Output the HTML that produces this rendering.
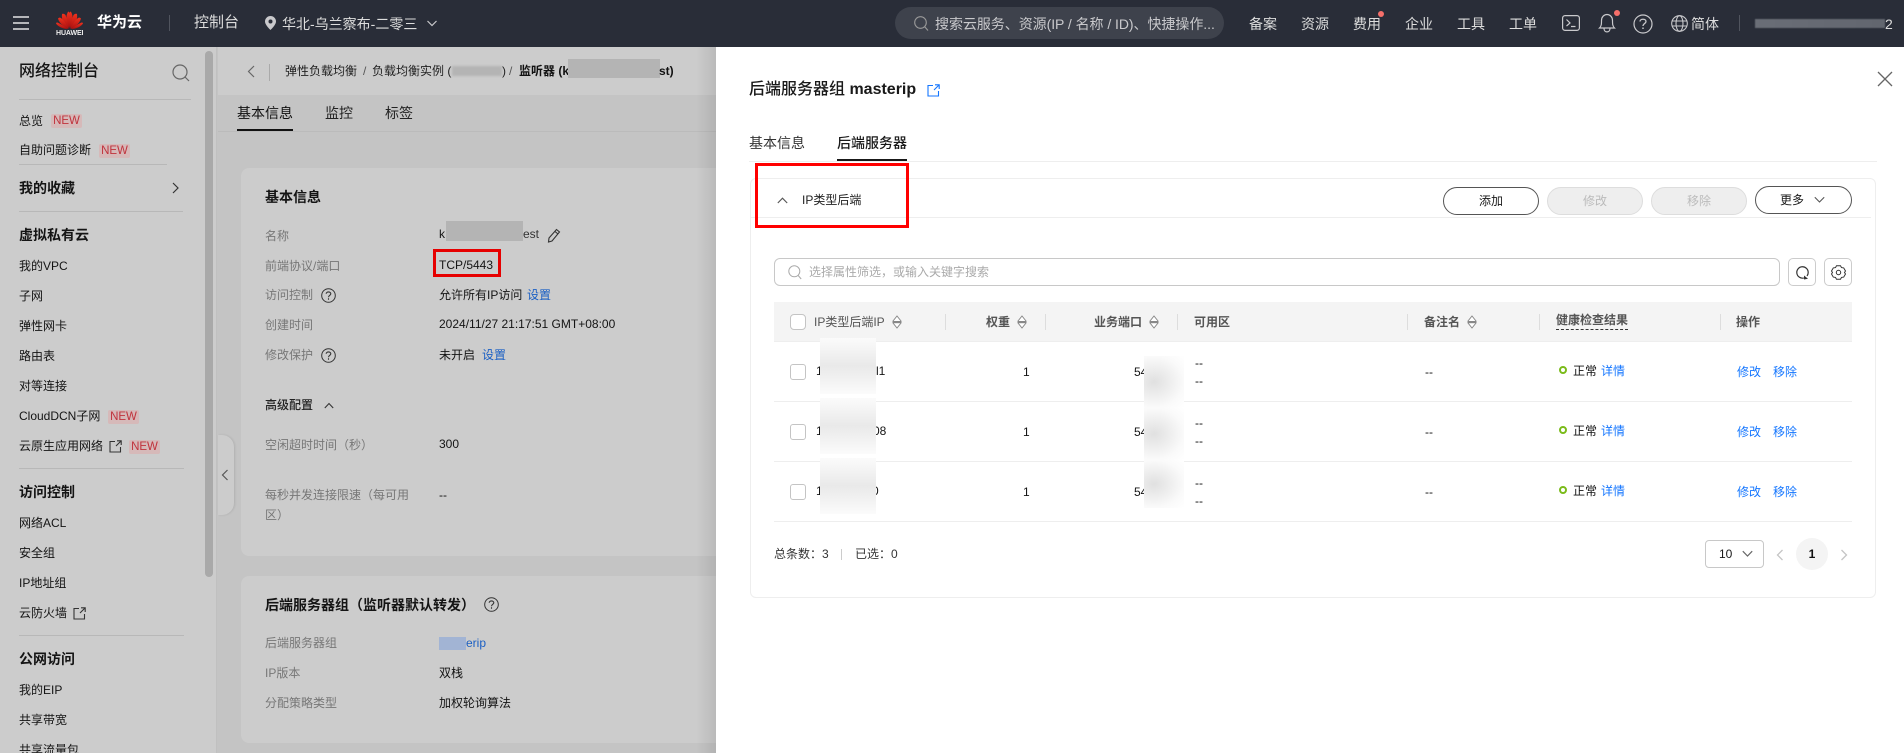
<!DOCTYPE html>
<html lang="zh"><head><meta charset="utf-8"><title>后端服务器组</title>
<style>
*{box-sizing:border-box}
html{margin:0;padding:0;width:1904px;height:753px;overflow:hidden;background:#c4c4c4}
body{margin:0;padding:0;width:1904px;height:753px;overflow:hidden;position:relative;background:#c4c4c4;font-family:"Liberation Sans","Noto Sans CJK SC",sans-serif;font-size:12px;color:#141414}
#w{position:absolute;left:0;top:0;width:1904px;height:753px;overflow:hidden;contain:paint}
.a,.t,svg.i{position:absolute}
.t{white-space:nowrap;line-height:20px;height:20px}
.n{font-size:14px;color:#ddd}
.b{font-weight:700}
.h{font-size:14px;font-weight:700}
.g{color:#777}
.l{color:#1a5fc4}
.bl{color:#1476ff}
.new{position:absolute;width:31px;height:14px;line-height:14px;background:#d6b9b9;color:#c0323c;font-size:11.5px;text-align:center;border-radius:2px}
.dv{position:absolute;height:1px;background:#b8b8b8}
.sep{position:absolute;width:1px;height:16px;background:#ddd;top:314px}
.cb{position:absolute;width:16px;height:16px;left:790px;border:1px solid #c4c4c4;border-radius:3px;background:#fff}
.rl{position:absolute;left:774px;width:1078px;height:1px;background:#eee}
.th{color:#555;font-weight:700;top:312px}
.btn{position:absolute;width:96px;height:28px;border-radius:14px;text-align:center;line-height:26px;border:1px solid #555;background:#fff;color:#191919}
.dis{border-color:#ddd;background:#eee;color:#bbb}
.ib{position:absolute;top:258px;width:28px;height:28px;border:1px solid #ccc;border-radius:5px;background:#fff}
.m1{position:absolute;background:#b4b4b4;filter:blur(1px)}
.mw{position:absolute;left:820px;width:56px;background:linear-gradient(180deg,#fbfbfb 0,#e9e9e9 50%,#fbfbfb 100%)}
.mp{position:absolute;left:1144px;width:40px;background:radial-gradient(ellipse at 25% 50%,#e0e0e0 0,#fafafa 70%,#fff 100%)}
</style></head><body><div id="w">

<!-- Top bar -->
<div class="a" style="left:0;top:0;width:1904px;height:47px;background:#292d38"></div>
<svg class="i" style="left:13px;top:15px" width="16" height="16" viewBox="0 0 16 16"><path d="M0 2h16M0 8h16M0 14h16" stroke="#c9c9cc" stroke-width="1.800"/></svg>
<svg class="i" style="left:56px;top:8px" width="27" height="21" viewBox="-13.500 -20 27 21"><defs><linearGradient id="pg" x1="0" y1="0" x2="0" y2="1"><stop offset="0" stop-color="#f0321e"/><stop offset="1" stop-color="#a81010"/></linearGradient></defs><g fill="url(#pg)"><path d="M-.3 0C-3.500-5-4.400-11-1.400-16.500-.3-16-.2-15.800 0-15 .8-10 .5-5-.3 0Z"/><path d="M.3 0C3.500-5 4.400-11 1.400-16.500.3-16 .2-15.800 0-15-.8-10-.5-5 .3 0Z"/><path d="M-.8 .5C-5-3-8.500-8-7.500-14-6-14.500-5-14-4-13-2.500-9-1.500-4-.8 .5Z"/><path d="M.8 .5C5-3 8.500-8 7.500-14 6-14.500 5-14 4-13 2.500-9 1.500-4 .8 .5Z"/><path d="M-1 .8C-5-1-10-4-11.500-9.500-10.500-10.500-9.500-10.500-8.500-10-5-7-2.500-3-1 .8Z"/><path d="M1 .8C5-1 10-4 11.500-9.500 10.500-10.500 9.500-10.500 8.500-10 5-7 2.500-3 1 .8Z"/><path d="M-1.500 1C-5 1-11-.5-13.500-4.500-13-6-12-5.500-11-5-7-3-4-1-1.500 1Z"/><path d="M1.500 1C5 1 11-.5 13.500-4.500 13-6 12-5.500 11-5 7-3 4-1 1.500 1Z"/></g></svg>
<div class="t" style="left:56px;top:24px;width:27px;text-align:center;font-size:7px;font-weight:700;color:#eee;letter-spacing:-.1px">HUAWEI</div>
<div class="t b" style="left:97px;top:13px;font-size:15px;color:#fff">华为云</div>
<div class="a" style="left:169px;top:15px;width:1px;height:16px;background:#50545e"></div>
<div class="t" style="left:194px;top:13px;font-size:15px;color:#ddd">控制台</div>
<svg class="i" style="left:265px;top:16px" width="11" height="14" viewBox="0 0 11 14"><path fill-rule="evenodd" d="M5.500 0A5.500 5.500 0 0 1 11 5.500C11 9 5.500 14 5.500 14S0 9 0 5.500A5.500 5.500 0 0 1 5.500 0ZM5.500 3.500a2 2 0 1 0 0 4 2 2 0 0 0 0-4Z" fill="#c9c9cc"/></svg>
<div class="t n" style="left:282px;top:14px">华北-乌兰察布-二零三</div>
<svg class="i" style="left:427px;top:20px" width="10" height="7" viewBox="0 0 10 7"><path d="M.5 1 5 5.500 9.500 1" fill="none" stroke="#c9c9cc" stroke-width="1.200"/></svg>
<div class="a" style="left:895px;top:7px;width:329px;height:32px;border-radius:16px;background:#3e424c"></div>
<svg class="i" style="left:914px;top:16px" width="15" height="15" viewBox="0 0 15 15"><circle cx="6.500" cy="6.500" r="5.800" fill="none" stroke="#999" stroke-width="1.100"/><path d="M10.500 10.500 14 14.500" stroke="#999" stroke-width="1.100"/></svg>
<div class="t" style="left:935px;top:14px;font-size:14px;color:#c9c9cc;width:282px;overflow:hidden;letter-spacing:-.05px">搜索云服务、资源(IP / 名称 / ID)、快捷操作...</div>
<div class="t n" style="left:1249px;top:14px">备案</div>
<div class="t n" style="left:1301px;top:14px">资源</div>
<div class="t n" style="left:1353px;top:14px">费用</div>
<div class="a" style="left:1378px;top:11px;width:6px;height:6px;border-radius:50%;background:#f66f6a"></div>
<div class="t n" style="left:1405px;top:14px">企业</div>
<div class="t n" style="left:1457px;top:14px">工具</div>
<div class="t n" style="left:1509px;top:14px">工单</div>
<svg class="i" style="left:1562px;top:15px" width="18" height="16" viewBox="0 0 18 16"><rect x=".6" y=".6" width="16.800" height="14.800" rx="2.500" fill="none" stroke="#c9c9cc" stroke-width="1.200"/><path d="M4.500 4.500 8 8 4.500 11M9 11.500h4.500" fill="none" stroke="#c9c9cc" stroke-width="1.200"/></svg>
<svg class="i" style="left:1598px;top:12px" width="18" height="21" viewBox="0 0 18 21"><path d="M1.500 16C3.500 14 3.500 12 3.500 8.500 3.500 5 6 2.500 9 2.500S14.500 5 14.500 8.500C14.500 12 14.500 14 16.500 16ZM6 16.500C6 21 12 21 12 16.500" fill="none" stroke="#c9c9cc" stroke-width="1.200"/></svg>
<div class="a" style="left:1614px;top:10px;width:6px;height:6px;border-radius:50%;background:#f66f6a"></div>
<svg class="i" style="left:1633px;top:14px" width="20" height="20" viewBox="0 0 20 20"><circle cx="10" cy="10" r="9" fill="none" stroke="#c9c9cc" stroke-width="1.200"/><path d="M7 7.500C7 4.500 13 4.500 13 7.500 13 9.500 10 9.500 10 12" fill="none" stroke="#c9c9cc" stroke-width="1.300"/><path d="M10 13.500v1.500" stroke="#c9c9cc" stroke-width="1.400"/></svg>
<svg class="i" style="left:1671px;top:15px" width="17" height="17" viewBox="0 0 17 17"><g fill="none" stroke="#c9c9cc" stroke-width="1.100"><circle cx="8.500" cy="8.500" r="7.800"/><ellipse cx="8.500" cy="8.500" rx="3.500" ry="7.800"/><path d="M1 6h15M1 11h15"/></g></svg>
<div class="t n" style="left:1691px;top:14px">简体</div>
<div class="a" style="left:1739px;top:15px;width:1px;height:16px;background:#50545e"></div>
<div class="a" style="left:1755px;top:19px;width:130px;height:9px;background:linear-gradient(90deg,#6a6e77,#62666f);filter:blur(.6px)"></div>
<div class="t n" style="left:1885px;top:14px">2</div>

<!-- Sidebar -->
<div class="a" style="left:0;top:47px;width:217px;height:706px;background:#ccc;border-right:1px solid #c0c0c0"></div>
<div class="a" style="left:205px;top:51px;width:8px;height:526px;border-radius:4px;background:#a9a9a9"></div>
<div class="t" style="left:19px;top:62px;font-size:16px;font-weight:500">网络控制台</div>
<svg class="i" style="left:172px;top:64px" width="18" height="18" viewBox="0 0 18 18"><circle cx="8" cy="8" r="7" fill="none" stroke="#666" stroke-width="1.200"/><path d="M13 13l4 4" stroke="#666" stroke-width="1.200"/></svg>
<div class="dv" style="left:19px;top:99px;width:172px"></div>
<div class="t" style="left:19px;top:111px">总览</div><div class="new" style="left:51px;top:114px">NEW</div>
<div class="t" style="left:19px;top:140px">自助问题诊断</div><div class="new" style="left:99px;top:144px">NEW</div>
<div class="dv" style="left:19px;top:164px;width:148px"></div>
<div class="t h" style="left:19px;top:178px">我的收藏</div>
<svg class="i" style="left:172px;top:182px" width="7" height="12" viewBox="0 0 7 12"><path d="M1 1l5 5-5 5" fill="none" stroke="#333" stroke-width="1.200"/></svg>
<div class="dv" style="left:19px;top:211px;width:164px"></div>
<div class="t h" style="left:19px;top:225px">虚拟私有云</div>
<div class="t" style="left:19px;top:256px">我的VPC</div>
<div class="t" style="left:19px;top:286px">子网</div>
<div class="t" style="left:19px;top:316px">弹性网卡</div>
<div class="t" style="left:19px;top:346px">路由表</div>
<div class="t" style="left:19px;top:376px">对等连接</div>
<div class="t" style="left:19px;top:406px">CloudDCN子网</div><div class="new" style="left:108px;top:410px">NEW</div>
<div class="t" style="left:19px;top:436px">云原生应用网络</div>
<svg class="i" style="left:109px;top:440px" width="13" height="13" viewBox="0 0 13 13"><path d="M6 1.500H1v10.500h10.500V7M8 .8h4.200V5M12 1 7 6" fill="none" stroke="#333" stroke-width="1.100"/></svg>
<div class="new" style="left:129px;top:440px">NEW</div>
<div class="dv" style="left:19px;top:468px;width:165px"></div>
<div class="t h" style="left:19px;top:482px">访问控制</div>
<div class="t" style="left:19px;top:513px">网络ACL</div>
<div class="t" style="left:19px;top:543px">安全组</div>
<div class="t" style="left:19px;top:573px">IP地址组</div>
<div class="t" style="left:19px;top:603px">云防火墙</div>
<svg class="i" style="left:73px;top:607px" width="13" height="13" viewBox="0 0 13 13"><path d="M6 1.500H1v10.500h10.500V7M8 .8h4.200V5M12 1 7 6" fill="none" stroke="#333" stroke-width="1.100"/></svg>
<div class="dv" style="left:19px;top:635px;width:165px"></div>
<div class="t h" style="left:19px;top:649px">公网访问</div>
<div class="t" style="left:19px;top:680px">我的EIP</div>
<div class="t" style="left:19px;top:710px">共享带宽</div>
<div class="a" style="left:0;top:733px;width:204px;height:20px;overflow:hidden"><div class="t" style="left:19px;top:7px">共享流量包</div></div>

<!-- Main -->
<div class="a" style="left:218px;top:47px;width:498px;height:48px;background:#ccc"></div>
<svg class="i" style="left:247px;top:65px" width="8" height="13" viewBox="0 0 8 13"><path d="M7 1 1.500 6.500 7 12" fill="none" stroke="#666" stroke-width="1.200"/></svg>
<div class="a" style="left:269px;top:64px;width:1px;height:17px;background:#aaa"></div>
<div class="t" style="left:285px;top:61px;color:#222">弹性负载均衡</div>
<div class="t" style="left:363px;top:61px;color:#555">/</div>
<div class="t" style="left:372px;top:61px;color:#222">负载均衡实例 (</div>
<div class="m1" style="left:452px;top:66px;width:50px;height:10px"></div>
<div class="t" style="left:502px;top:61px;color:#222">)</div>
<div class="t" style="left:509px;top:61px;color:#555">/</div>
<div class="t b" style="left:519px;top:61px;color:#111">监听器 (k</div>
<div class="a" style="left:568px;top:59px;width:92px;height:19px;background:#b4b4b4"></div>
<div class="t b" style="left:659px;top:61px;color:#111">st)</div>
<div class="a" style="left:218px;top:131px;width:498px;height:1px;background:#bbb"></div>
<div class="t" style="left:237px;top:103px;font-size:14px;color:#111">基本信息</div>
<div class="a" style="left:237px;top:129px;width:56px;height:2px;background:#111"></div>
<div class="t" style="left:325px;top:103px;font-size:14px;color:#222">监控</div>
<div class="t" style="left:385px;top:103px;font-size:14px;color:#222">标签</div>

<div class="a" style="left:241px;top:168px;width:475px;height:388px;background:#ccc;border-radius:8px 0 0 8px"></div>
<div class="t h" style="left:265px;top:187px">基本信息</div>
<div class="t g" style="left:265px;top:226px">名称</div>
<div class="t" style="left:439px;top:224px">k</div>
<div class="a" style="left:446px;top:221px;width:77px;height:20px;background:#b4b4b4"></div>
<div class="t" style="left:523px;top:224px;color:#333">est</div>
<svg class="i" style="left:547px;top:228px" width="14" height="15" viewBox="0 0 14 15"><path d="M9.500 1.500 12.500 4 5 13 1.500 14 2 10Z M8 3.500 11 6" fill="none" stroke="#333" stroke-width="1.100"/></svg>
<div class="t g" style="left:265px;top:256px">前端协议/端口</div>
<div class="a" style="left:433px;top:249px;width:68px;height:28px;border:3px solid #e60000"></div>
<div class="t" style="left:439px;top:255px">TCP/5443</div>
<div class="t g" style="left:265px;top:285px">访问控制</div>
<svg class="i" style="left:321px;top:288px" width="15" height="15" viewBox="0 0 15 15"><circle cx="7.500" cy="7.500" r="6.800" fill="none" stroke="#333" stroke-width="1"/><path d="M5.200 5.800C5.200 3.300 9.800 3.300 9.800 5.800 9.800 7.300 7.500 7.300 7.500 9.300M7.500 10.300v1.500" fill="none" stroke="#333" stroke-width="1.100"/></svg>
<div class="t" style="left:439px;top:285px">允许所有IP访问</div>
<div class="t l" style="left:527px;top:285px">设置</div>
<div class="t g" style="left:265px;top:315px">创建时间</div>
<div class="t" style="left:439px;top:314px">2024/11/27 21:17:51 GMT+08:00</div>
<div class="t g" style="left:265px;top:345px">修改保护</div>
<svg class="i" style="left:321px;top:348px" width="15" height="15" viewBox="0 0 15 15"><circle cx="7.500" cy="7.500" r="6.800" fill="none" stroke="#333" stroke-width="1"/><path d="M5.200 5.800C5.200 3.300 9.800 3.300 9.800 5.800 9.800 7.300 7.500 7.300 7.500 9.300M7.500 10.300v1.500" fill="none" stroke="#333" stroke-width="1.100"/></svg>
<div class="t" style="left:439px;top:345px">未开启</div>
<div class="t l" style="left:482px;top:345px">设置</div>
<div class="t" style="left:265px;top:395px;color:#222;font-weight:500">高级配置</div>
<svg class="i" style="left:324px;top:402px" width="10" height="7" viewBox="0 0 10 7"><path d="M.8 6 5 1.500 9.200 6" fill="none" stroke="#333" stroke-width="1.100"/></svg>
<div class="t g" style="left:265px;top:435px">空闲超时时间（秒）</div>
<div class="t" style="left:439px;top:434px">300</div>
<div class="t g" style="left:265px;top:485px">每秒并发连接限速（每可用</div>
<div class="t g" style="left:265px;top:505px">区）</div>
<div class="t" style="left:439px;top:485px">--</div>

<div class="a" style="left:241px;top:576px;width:475px;height:167px;background:#ccc;border-radius:8px 0 0 8px"></div>
<div class="t h" style="left:265px;top:595px">后端服务器组（监听器默认转发）</div>
<svg class="i" style="left:484px;top:597px" width="15" height="15" viewBox="0 0 15 15"><circle cx="7.500" cy="7.500" r="6.800" fill="none" stroke="#333" stroke-width="1"/><path d="M5.200 5.800C5.200 3.300 9.800 3.300 9.800 5.800 9.800 7.300 7.500 7.300 7.500 9.300M7.500 10.300v1.500" fill="none" stroke="#333" stroke-width="1.100"/></svg>
<div class="t g" style="left:265px;top:633px">后端服务器组</div>
<div class="a" style="left:439px;top:637px;width:27px;height:13px;background:#a2b4d4"></div>
<div class="t l" style="left:466px;top:633px">erip</div>
<div class="t g" style="left:265px;top:663px">IP版本</div>
<div class="t" style="left:439px;top:663px">双栈</div>
<div class="t g" style="left:265px;top:693px">分配策略类型</div>
<div class="t" style="left:439px;top:693px">加权轮询算法</div>

<div class="a" style="left:218px;top:435px;width:16px;height:80px;background:#ccc;border-radius:0 12px 12px 0;box-shadow:1px 0 2px rgba(0,0,0,.1)"></div>
<svg class="i" style="left:221px;top:469px" width="8" height="12" viewBox="0 0 8 12"><path d="M6.500 1 1.500 6l5 5" fill="none" stroke="#555" stroke-width="1.200"/></svg>

<div class="a" style="left:696px;top:47px;width:20px;height:706px;background:linear-gradient(90deg,rgba(0,0,0,0),rgba(0,0,0,.09))"></div>

<!-- Drawer -->
<div class="a" style="left:716px;top:47px;width:1188px;height:706px;background:#fff"></div>
<div class="t" style="left:749px;top:80px;font-size:16px;font-weight:500;color:#191919">后端服务器组 <span class="b">masterip</span></div>
<svg class="i" style="left:927px;top:84px" width="13" height="13" viewBox="0 0 13 13"><path d="M6 1.500H1v10.500h10.500V7M8 .8h4.200V5M12 1 7 6" fill="none" stroke="#1476ff" stroke-width="1.100"/></svg>
<svg class="i" style="left:1877px;top:71px" width="16" height="16" viewBox="0 0 16 16"><path d="M1 1l14 14M15 1 1 15" stroke="#666" stroke-width="1.300"/></svg>
<div class="t" style="left:749px;top:133px;font-size:14px;color:#333">基本信息</div>
<div class="t" style="left:837px;top:133px;font-size:14px;color:#191919;font-weight:500">后端服务器</div>
<div class="a" style="left:749px;top:161px;width:1128px;height:1px;background:#eee"></div>
<div class="a" style="left:837px;top:159px;width:70px;height:2px;background:#191919"></div>

<div class="a" style="left:750px;top:178px;width:1126px;height:420px;border:1px solid #eee;border-radius:6px"></div>
<div class="a" style="left:751px;top:217px;width:1120px;height:1px;background:#eee"></div>
<svg class="i" style="left:777px;top:197px" width="11" height="7" viewBox="0 0 11 7"><path d="M.8 6 5.500 1.200 10.200 6" fill="none" stroke="#555" stroke-width="1.100"/></svg>
<div class="t" style="left:802px;top:190px;color:#222">IP类型后端</div>
<div class="a" style="left:755px;top:163px;width:154px;height:65px;border:3px solid #f00"></div>

<div class="btn" style="left:1443px;top:187px">添加</div>
<div class="btn dis" style="left:1547px;top:187px">修改</div>
<div class="btn dis" style="left:1651px;top:187px">移除</div>
<div class="btn" style="left:1755px;top:186px;width:97px;text-align:left;padding-left:24px">更多</div>
<svg class="i" style="left:1814px;top:196px" width="11" height="8" viewBox="0 0 11 8"><path d="M.8 1.200 5.500 6 10.200 1.200" fill="none" stroke="#555" stroke-width="1.100"/></svg>

<div class="a" style="left:774px;top:258px;width:1006px;height:28px;border:1px solid #c8c8c8;border-radius:6px"></div>
<svg class="i" style="left:788px;top:265px" width="14" height="15" viewBox="0 0 14 15"><circle cx="6.300" cy="6.300" r="5.500" fill="none" stroke="#aaa" stroke-width="1"/><path d="M10.200 10.500l3 3.500" stroke="#aaa" stroke-width="1"/></svg>
<div class="t" style="left:809px;top:262px;color:#aaa">选择属性筛选，或输入关键字搜索</div>
<div class="ib" style="left:1788px"></div><div class="ib" style="left:1824px"></div>
<svg class="i" style="left:1795px;top:265px" width="15" height="15" viewBox="0 0 15 15"><path d="M13.200 7.500A5.700 5.700 0 1 0 8.800 13" fill="none" stroke="#333" stroke-width="1.200"/><path d="M13.200 7.500A5.700 5.700 0 0 1 12 11" fill="none" stroke="#333" stroke-width="1.200"/><path d="M9 10.500v4l4-.8Z" fill="#333"/></svg>
<svg class="i" style="left:1831px;top:265px" width="15" height="15" viewBox="0 0 15 15"><path d="M5.500 .8h4l1 1.800 2.200.3L14.500 6l-1 1.500 1 1.500-1.800 3.100-2.200.3-1 1.800h-4l-1-1.800-2.200-.3L.5 9l1-1.500L.5 6l1.800-3.100 2.200-.3Z" fill="none" stroke="#333" stroke-width="1"/><circle cx="7.500" cy="7.500" r="2.200" fill="none" stroke="#333" stroke-width="1"/></svg>

<div class="a" style="left:774px;top:302px;width:1078px;height:40px;background:#f4f4f4;border-bottom:1px solid #eee"></div>
<div class="cb" style="top:314px;border-radius:4px"></div>
<div class="t th" style="left:814px;font-weight:400">IP类型后端IP</div>
<svg class="i" style="left:892px;top:315px" width="10" height="14" viewBox="0 0 10 14"><path d="M5 1 9 6v2l-4 5-4-5V6Z" fill="#fff" stroke="#888"/><rect x="1" y="6" width="8" height="2.200" fill="#888"/></svg>
<div class="sep" style="left:945px"></div>
<div class="t th" style="left:986px">权重</div>
<svg class="i" style="left:1017px;top:315px" width="10" height="14" viewBox="0 0 10 14"><path d="M5 1 9 6v2l-4 5-4-5V6Z" fill="#fff" stroke="#888"/><rect x="1" y="6" width="8" height="2.200" fill="#888"/></svg>
<div class="sep" style="left:1045px"></div>
<div class="t th" style="left:1094px">业务端口</div>
<svg class="i" style="left:1149px;top:315px" width="10" height="14" viewBox="0 0 10 14"><path d="M5 1 9 6v2l-4 5-4-5V6Z" fill="#fff" stroke="#888"/><rect x="1" y="6" width="8" height="2.200" fill="#888"/></svg>
<div class="sep" style="left:1177px"></div>
<div class="t th" style="left:1194px">可用区</div>
<div class="sep" style="left:1407px"></div>
<div class="t th" style="left:1424px">备注名</div>
<svg class="i" style="left:1467px;top:315px" width="10" height="14" viewBox="0 0 10 14"><path d="M5 1 9 6v2l-4 5-4-5V6Z" fill="#fff" stroke="#888"/><rect x="1" y="6" width="8" height="2.200" fill="#888"/></svg>
<div class="sep" style="left:1539px"></div>
<div class="t th" style="left:1556px;top:310px;border-bottom:1px dashed #333;height:20px">健康检查结果</div>
<div class="sep" style="left:1720px"></div>
<div class="t th" style="left:1736px">操作</div>

<!-- rows -->
<div class="rl" style="top:401px"></div><div class="rl" style="top:461px"></div><div class="rl" style="top:521px"></div>
<div class="cb" style="top:364px"></div><div class="cb" style="top:424px"></div><div class="cb" style="top:484px"></div>
<div class="t" style="left:816px;top:361px">1</div><div class="t" style="left:876px;top:361px">l1</div>
<div class="t" style="left:816px;top:421px">1</div><div class="t" style="left:873px;top:421px">08</div>
<div class="t" style="left:816px;top:481px">1</div><div class="t" style="left:872px;top:481px">0</div>
<div class="mw" style="top:338px;height:56px"></div><div class="mw" style="top:398px;height:56px"></div><div class="mw" style="top:458px;height:56px"></div>
<div class="t" style="left:1023px;top:362px">1</div><div class="t" style="left:1023px;top:422px">1</div><div class="t" style="left:1023px;top:482px">1</div>
<div class="t" style="left:1134px;top:362px">54</div><div class="t" style="left:1134px;top:422px">54</div><div class="t" style="left:1134px;top:482px">54</div>
<div class="mp" style="top:356px;height:52px"></div><div class="mp" style="top:408px;height:52px"></div><div class="mp" style="top:460px;height:48px"></div>
<div class="t" style="left:1195px;top:353px">--</div><div class="t" style="left:1195px;top:371px">--</div>
<div class="t" style="left:1195px;top:413px">--</div><div class="t" style="left:1195px;top:431px">--</div>
<div class="t" style="left:1195px;top:473px">--</div><div class="t" style="left:1195px;top:491px">--</div>
<div class="t" style="left:1425px;top:362px">--</div><div class="t" style="left:1425px;top:422px">--</div><div class="t" style="left:1425px;top:482px">--</div>

<div class="a" style="left:1559px;top:366px;width:8px;height:8px;border:2px solid #7bbb1a;border-radius:50%"></div>
<div class="t" style="left:1573px;top:361px">正常</div><div class="t bl" style="left:1601px;top:361px">详情</div>
<div class="a" style="left:1559px;top:426px;width:8px;height:8px;border:2px solid #7bbb1a;border-radius:50%"></div>
<div class="t" style="left:1573px;top:421px">正常</div><div class="t bl" style="left:1601px;top:421px">详情</div>
<div class="a" style="left:1559px;top:486px;width:8px;height:8px;border:2px solid #7bbb1a;border-radius:50%"></div>
<div class="t" style="left:1573px;top:481px">正常</div><div class="t bl" style="left:1601px;top:481px">详情</div>
<div class="t bl" style="left:1737px;top:362px">修改</div><div class="t bl" style="left:1773px;top:362px">移除</div>
<div class="t bl" style="left:1737px;top:422px">修改</div><div class="t bl" style="left:1773px;top:422px">移除</div>
<div class="t bl" style="left:1737px;top:482px">修改</div><div class="t bl" style="left:1773px;top:482px">移除</div>

<!-- footer -->
<div class="t" style="left:774px;top:544px;color:#333">总条数：3</div>
<div class="a" style="left:841px;top:549px;width:1px;height:11px;background:#ccc"></div>
<div class="t" style="left:855px;top:544px;color:#333">已选：0</div>
<div class="a" style="left:1705px;top:540px;width:59px;height:28px;border:1px solid #c8c8c8;border-radius:4px"></div>
<div class="t" style="left:1719px;top:544px;color:#191919">10</div>
<svg class="i" style="left:1742px;top:550px" width="11" height="8" viewBox="0 0 11 8"><path d="M.8 1.200 5.500 6 10.200 1.200" fill="none" stroke="#666" stroke-width="1.200"/></svg>
<svg class="i" style="left:1776px;top:549px" width="8" height="12" viewBox="0 0 8 12"><path d="M6.500 1 1.500 6l5 5" fill="none" stroke="#c4c4c4" stroke-width="1.300"/></svg>
<div class="a" style="left:1796px;top:538px;width:32px;height:32px;border-radius:50%;background:#f4f4f4"></div>
<div class="t b" style="left:1796px;top:544px;width:32px;text-align:center;color:#111">1</div>
<svg class="i" style="left:1840px;top:549px" width="8" height="12" viewBox="0 0 8 12"><path d="M1.500 1l5 5-5 5" fill="none" stroke="#c4c4c4" stroke-width="1.300"/></svg>
</div></body></html>
